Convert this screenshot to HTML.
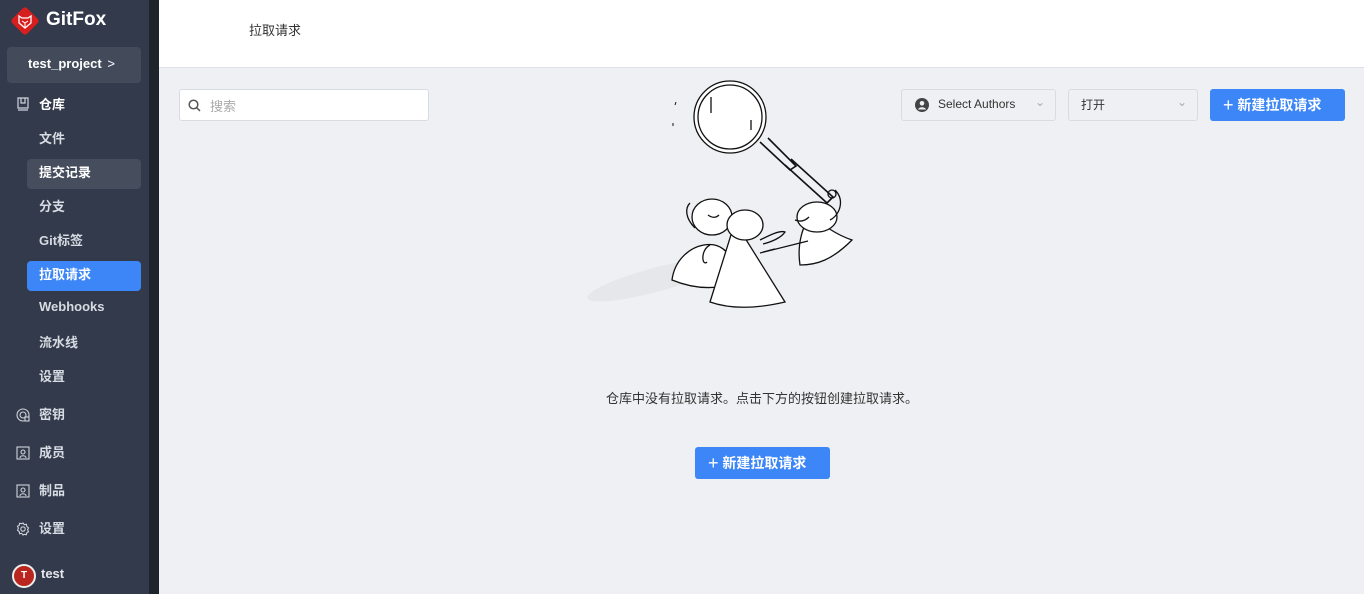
<!DOCTYPE html>
<html><head><meta charset="utf-8"><style>
*{box-sizing:border-box;margin:0;padding:0}
body{width:1364px;height:594px;overflow:hidden;font-family:"Liberation Sans","Noto Sans CJK SC",sans-serif;background:#eff0f3;position:relative}
.sb{position:absolute;left:0;top:0;width:149px;height:594px;background:#323a4b;color:#d7dbe2}
.strip{position:absolute;left:149px;top:0;width:10px;height:594px;background:#1f232b}
.hdr{position:absolute;left:159px;top:0;right:0;height:68px;background:#fff;border-bottom:1px solid #dcdfe6}
.hdr span{position:absolute;left:90px;top:20px;font-size:13px;color:#333}
.logo{position:absolute;left:10px;top:6px}
.logot{position:absolute;left:46px;top:9px;font-size:19px;font-weight:bold;color:#fff}
.proj{position:absolute;left:7px;top:47px;width:134px;height:36px;background:#434b5b;border-radius:4px;color:#fff;font-size:13px;font-weight:bold;padding:9px 0 0 21px}
.it{position:absolute;left:39px;font-size:13px;font-weight:bold;color:#d7dbe2}
.sel{position:absolute;left:27px;width:114px;height:30px;border-radius:4px}
.ic{position:absolute;left:16px;width:14px;height:14px}
.btn{position:absolute;background:#3d86f7;color:#fff;font-weight:bold;font-size:14px;border-radius:3px}
.box{position:absolute;background:#eff0f3;border:1px solid #d8dbe2;border-radius:3px;font-size:12px;color:#333}
</style></head><body>
<div class="sb">
<svg class="logo" width="30" height="30" viewBox="0 0 30 30"><rect x="4.5" y="4.5" width="21" height="21" transform="rotate(45 15 15)" rx="3" fill="#d71f1f"/><path d="M9 10l3 2h6l3-2v7l-6 5-6-5z" fill="none" stroke="#fff" stroke-width="1.3"/><path d="M12 15l3 2 3-2M15 17v4" stroke="#fff" fill="none" stroke-width="1"/></svg>
<div class="logot">GitFox</div>
<div class="proj">test_project <span style="font-weight:normal;margin-left:2px">&gt;</span></div>
<svg class="ic" style="top:97px" viewBox="0 0 14 14" fill="none" stroke="#cfd4dc" stroke-width="1.2"><path d="M2 1h10v10H2zM2 13h10M5 1v5h4V1"/></svg>
<div class="it" style="top:94px;color:#fff">仓库</div>
<div class="it" style="top:128px">文件</div>
<div class="sel" style="top:159px;background:#464e5e"></div>
<div class="it" style="top:162px;color:#fff">提交记录</div>
<div class="it" style="top:196px">分支</div>
<div class="it" style="top:230px">Git标签</div>
<div class="sel" style="top:261px;background:#3d86f7"></div>
<div class="it" style="top:264px;color:#fff">拉取请求</div>
<div class="it" style="top:299px">Webhooks</div>
<div class="it" style="top:332px">流水线</div>
<div class="it" style="top:366px">设置</div>
<svg class="ic" style="top:408px" viewBox="0 0 14 14" fill="none" stroke="#cfd4dc" stroke-width="1.1"><circle cx="7" cy="7" r="6"/><circle cx="7" cy="7" r="3"/><rect x="9" y="9" width="4" height="4" fill="#323a4b"/></svg>
<div class="it" style="top:404px">密钥</div>
<svg class="ic" style="top:446px" viewBox="0 0 14 14" fill="none" stroke="#cfd4dc" stroke-width="1.1"><rect x="1" y="1" width="12" height="12"/><circle cx="7" cy="6" r="2"/><path d="M4 12c0-3 6-3 6 0"/></svg>
<div class="it" style="top:442px">成员</div>
<svg class="ic" style="top:484px" viewBox="0 0 14 14" fill="none" stroke="#cfd4dc" stroke-width="1.1"><rect x="1" y="1" width="12" height="12"/><circle cx="7" cy="6" r="2"/><path d="M4 12c0-3 6-3 6 0"/></svg>
<div class="it" style="top:480px">制品</div>
<svg class="ic" style="top:522px" viewBox="0 0 14 14" fill="none" stroke="#cfd4dc" stroke-width="1.1"><circle cx="7" cy="7" r="2.2"/><path d="M7 1l1.3 1.7 2.1-.4.4 2.1L12.5 6 11.6 7.8l.9 1.9-1.7.9-.4 2.1-2.1-.4L7 13l-1.3-1.7-2.1.4-.4-2.1L1.5 8.2 2.4 6.2 1.5 4.3l1.7-.9.4-2.1 2.1.4z"/></svg>
<div class="it" style="top:518px">设置</div>
<div style="position:absolute;left:12px;top:564px;width:24px;height:24px;border-radius:50%;background:#b8261f;border:2px solid #eee;color:#fff;font-size:10px;font-weight:bold;text-align:center;line-height:20px">T</div>
<div class="it" style="left:41px;top:566px;font-size:13px;color:#e5e7eb">test</div>
</div>
<div class="strip"></div>
<div class="hdr"><span>拉取请求</span></div>
<div class="box" style="left:179px;top:89px;width:250px;height:32px;background:#fff;color:#aaa;font-size:13px;padding:6px 0 0 30px">搜索
<svg style="position:absolute;left:8px;top:9px" width="13" height="13" viewBox="0 0 13 13" fill="none" stroke="#555" stroke-width="1.5"><circle cx="5.5" cy="5.5" r="4.3"/><path d="M8.7 8.7L12 12"/></svg></div>
<div class="box" style="left:901px;top:89px;width:155px;height:32px;padding:7px 0 0 36px">Select Authors
<svg style="position:absolute;left:13px;top:8px" width="14" height="14" viewBox="0 0 14 14"><circle cx="7" cy="7" r="7" fill="#444"/><circle cx="7" cy="5.3" r="2.3" fill="#eff0f3"/><path d="M3 11.5c1-3 7-3 8 0" fill="#eff0f3"/></svg>
<span style="position:absolute;right:10px;top:5px;color:#aaa">⌄</span></div>
<div class="box" style="left:1068px;top:89px;width:130px;height:32px;padding:6px 0 0 12px">打开<span style="position:absolute;right:10px;top:5px;color:#aaa">⌄</span></div>
<div class="btn" style="left:1210px;top:89px;width:135px;height:32px;padding:5px 0 0 13px"><span style="font-size:18px;font-weight:normal;position:relative;top:1px">+</span> 新建拉取请求</div>
<svg style="position:absolute;left:580px;top:80px" width="300" height="230" viewBox="0 0 300 230" fill="none" stroke="#111" stroke-width="1.3">
<ellipse cx="75" cy="200" rx="70" ry="12" fill="#e6e7ea" stroke="none" transform="rotate(-15 75 200)"/>
<circle cx="150" cy="37" r="36" fill="#fff"/><circle cx="150" cy="37" r="32"/>
<path d="M131 17v16M171 40v10"/>
<path d="M180 62l30 28 6-4-28-28M205 85l42 38 6-6-42-38" stroke-width="1.6"/>
<circle cx="252" cy="114" r="4"/>
<path d="M92 200c5-40 60-50 60-10 0 8-2 14-3 15-20 5-40 2-57-5z" fill="#fff"/>
<path d="M110 123c-5 5-5 15 5 25" />
<ellipse cx="132" cy="137" rx="20" ry="18" fill="#fff"/><path d="M128 135c4 3 8 3 11 0"/>
<path d="M220 185c-3-20 2-40 12-50 10 10 25 20 40 25-20 20-35 25-52 25z" fill="#fff"/>
<ellipse cx="237" cy="137" rx="20" ry="15" fill="#fff"/><path d="M215 140c5 2 10 1 14-3"/>
<path d="M255 110c10 10 5 25-5 30"/>
<path d="M180 173l48-12"/><path d="M183 172c5-1 10-3 12-3" />
<path d="M155 142l50 80c-30 7-55 7-75 0z" fill="#fff"/>
<ellipse cx="165" cy="145" rx="18" ry="15" fill="#fff"/>
<path d="M130 165c-10 5-8 22-3 17M180 160c10-5 20-10 25-8-4 6-14 10-22 12"/>
<path d="M95 25l1-3M93 43v3" stroke-width="1"/>
</svg>
<div style="position:absolute;left:606px;top:388px;font-size:13px;color:#333">仓库中没有拉取请求。点击下方的按钮创建拉取请求。</div>
<div class="btn" style="left:695px;top:447px;width:135px;height:32px;padding:5px 0 0 13px"><span style="font-size:18px;font-weight:normal;position:relative;top:1px">+</span> 新建拉取请求</div>
</body></html>
